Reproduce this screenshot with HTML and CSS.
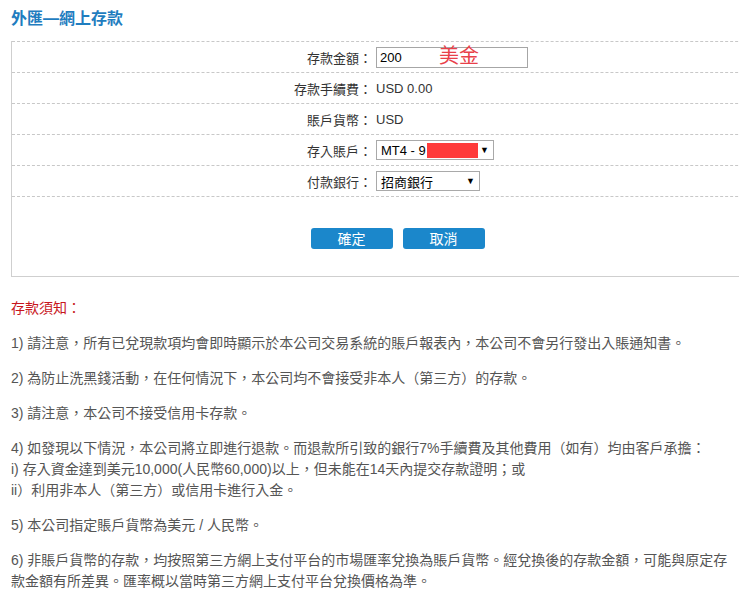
FILE: index.html
```html
<!DOCTYPE html>
<html lang="zh-Hant">
<head>
    <meta charset="UTF-8">
    <meta name="viewport" content="width=device-width, initial-scale=1.0">
    <title>外匯—網上存款</title>
    <link rel="stylesheet" href="styles.css">
</head>
<body>
<div class="page">
    <h2 class="page-title">外匯—網上存款</h2>

    <div class="deposit-box">
        <div class="row">
            <div class="label">存款金額：</div>
            <div class="value">
                <div class="amount">
                    <input type="text" class="amount-input" value="200">
                    <span class="currency-tag">美金</span>
                </div>
            </div>
        </div>
        <div class="row">
            <div class="label">存款手續費：</div>
            <div class="value">USD 0.00</div>
        </div>
        <div class="row">
            <div class="label">賬戶貨幣：</div>
            <div class="value">USD</div>
        </div>
        <div class="row">
            <div class="label">存入賬戶：</div>
            <div class="value">
                <div class="fake-select account-select">
                    <span class="sel-text">MT4 - 9</span>
                    <span class="sel-arrow">▼</span>
                    <span class="redact"></span>
                </div>
            </div>
        </div>
        <div class="row last">
            <div class="label">付款銀行：</div>
            <div class="value">
                <div class="fake-select bank-select">
                    <span class="sel-text">招商銀行</span>
                    <span class="sel-arrow">▼</span>
                </div>
            </div>
        </div>
        <div class="actions">
            <button class="btn">確定</button>
            <button class="btn">取消</button>
        </div>
    </div>

    <div class="notice">
        <h4 class="notice-title">存款須知：</h4>
        <p>1) 請注意，所有已兌現款項均會即時顯示於本公司交易系統的賬戶報表內，本公司不會另行發出入賬通知書。</p>
        <p>2) 為防止洗黑錢活動，在任何情況下，本公司均不會接受非本人（第三方）的存款。</p>
        <p>3) 請注意，本公司不接受信用卡存款。</p>
        <p>4) 如發現以下情況，本公司將立即進行退款。而退款所引致的銀行7%手續費及其他費用（如有）均由客戶承擔：<br>
        i) 存入資金達到美元10,000(人民幣60,000)以上，但未能在14天內提交存款證明；或<br>
        ii）利用非本人（第三方）或信用卡進行入金。</p>
        <p>5) 本公司指定賬戶貨幣為美元 / 人民幣。</p>
        <p>6) 非賬戶貨幣的存款，均按照第三方網上支付平台的市場匯率兌換為賬戶貨幣。經兌換後的存款金額，可能與原定存款金額有所差異。匯率概以當時第三方網上支付平台兌換價格為準。</p>
    </div>
</div>
</body>
</html>
```

FILE: styles.css
```css
* {
    padding: 0;
    margin: 0;
    box-sizing: border-box;
}
body {
    font-family: "Liberation Sans", Arial, "Noto Sans CJK TC", sans-serif;
    font-size: 13px;
    color: #333;
    background: #fff;
}
.page {
    width: 739px;
    overflow: hidden;
    padding: 7px 0 0 11px;
}
.page-title {
    font-size: 16px;
    font-weight: bold;
    line-height: 24px;
    color: #1f7dbf;
    margin-bottom: 10px;
}
.deposit-box {
    width: 772px;
    border-left: 1px solid #cfcfcf;
    border-bottom: 1px solid #cfcfcf;
}
.row {
    display: grid;
    grid-template-columns: 360px 1fr;
    column-gap: 4px;
    height: 31px;
    align-items: center;
    border-top: 1px dashed #c8c8c8;
}
.row.last {
    border-bottom: 1px dashed #c8c8c8;
    height: 32px;
}
.label {
    text-align: right;
    color: #333;
}
.value {
    color: #333;
}
.amount {
    position: relative;
    width: 152px;
}
.amount-input {
    width: 152px;
    height: 21px;
    border: 1px solid #a6a6a6;
    padding: 0 3px;
    font-family: "Liberation Sans", Arial, sans-serif;
    font-size: 13px;
    color: #000;
    outline: none;
}
.currency-tag {
    position: absolute;
    left: 63px;
    top: -3px;
    font-size: 20px;
    line-height: 24px;
    color: #e8414a;
}
.fake-select {
    position: relative;
    display: flex;
    align-items: center;
    justify-content: space-between;
    height: 20px;
    border: 1px solid #a9a9a9;
    padding: 0 4px 0 4px;
    color: #000;
    background: #fff;
}
.account-select {
    width: 118px;
}
.bank-select {
    width: 104px;
}
.sel-arrow {
    font-size: 9px;
    color: #000;
}
.redact {
    position: absolute;
    left: 50px;
    top: 2px;
    width: 51px;
    height: 15px;
    background: #ff3b3b;
}
.actions {
    display: flex;
    justify-content: center;
    gap: 10px;
    padding: 31px 0 27px;
}
.btn {
    width: 82px;
    height: 21px;
    border: none;
    border-radius: 3px;
    background: #1b87cb;
    color: #fff;
    font-family: "Noto Sans CJK TC", sans-serif;
    font-size: 14px;
    line-height: 21px;
}
.notice {
    margin-top: 21px;
    font-size: 14px;
    color: #555;
}
.notice-title {
    font-size: 14px;
    font-weight: normal;
    color: #c8161d;
    line-height: 21px;
    margin-bottom: 14px;
}
.notice p {
    line-height: 21px;
    margin-bottom: 14px;
}
```
